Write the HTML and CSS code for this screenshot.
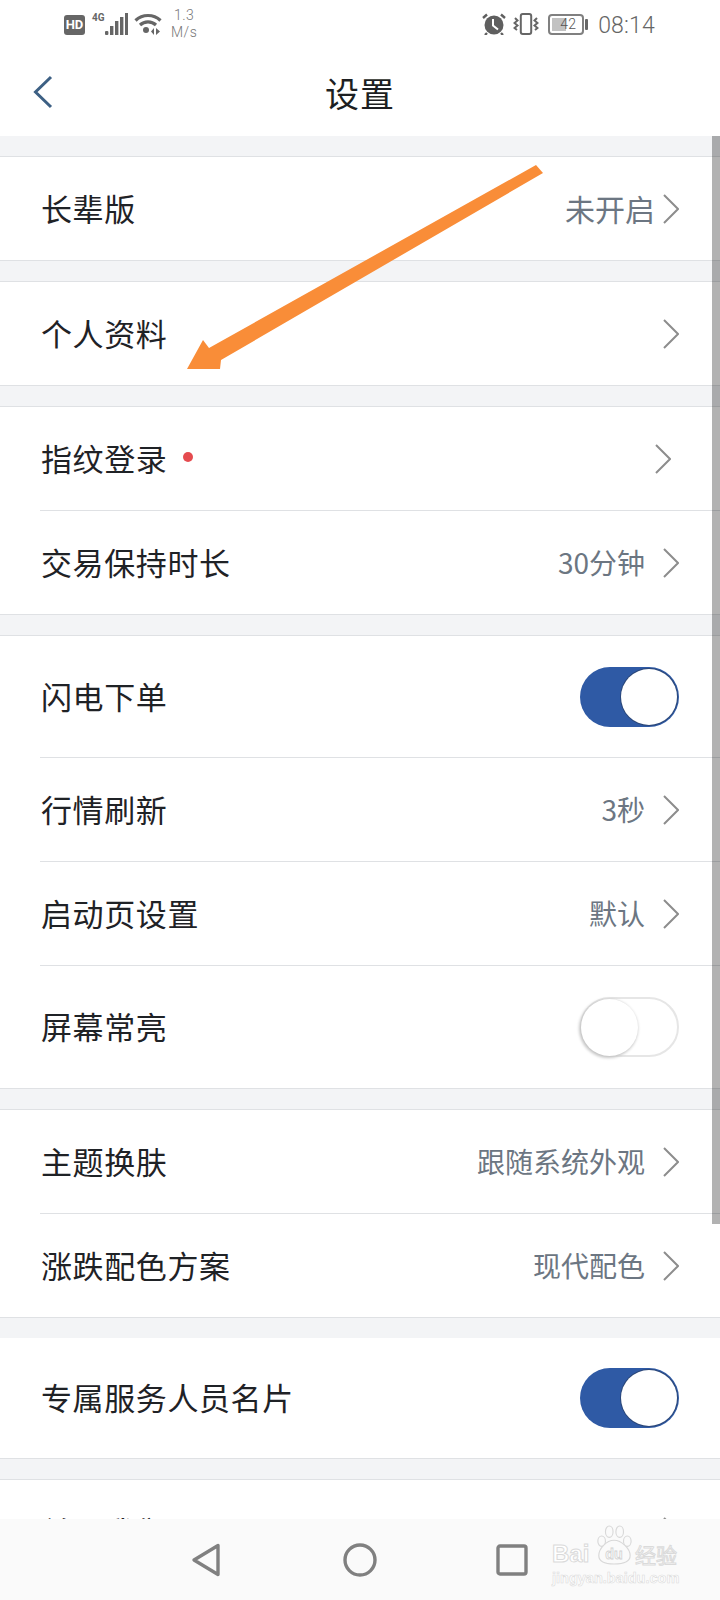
FILE: index.html
```html
<!DOCTYPE html>
<html lang="zh-CN">
<head>
<meta charset="utf-8">
<title>设置</title>
<link rel="stylesheet" href="styles.css">
</head>
<body>
<div class="page">
  <div class="status">
    <div class="status-left">
      <span class="hd">HD</span>
      <span class="net">4G</span>
      <svg class="signal" viewBox="0 0 23 22"><rect x="0" y="18" width="3.4" height="4" rx="1"/><rect x="5" y="13" width="3.4" height="9"/><rect x="10" y="8" width="3.4" height="14"/><rect x="15" y="4" width="3.4" height="18"/><rect x="20" y="0" width="3" height="22"/></svg>
      <svg class="wifi" viewBox="0 0 28 22"><path class="wifi-arc" d="M1.500 7.500C8.500 .8 19.500 .8 26.500 7.500"/><path class="wifi-arc" d="M6 12C10.500 7.800 17.500 7.800 22 12"/><circle cx="12" cy="17" r="3"/><path d="M20 15v7l-3-3.500zM22 15v7l4-3.500z"/></svg>
      <span class="speed"><span>1.3</span><span>M/s</span></span>
    </div>
    <div class="status-right">
      <svg class="alarm" viewBox="0 0 24 22"><circle cx="12" cy="12" r="9.500"/><path class="alarm-hand" d="M11 6v6.500l5 4"/><path class="alarm-bell" d="M1 5 5 1.500M23 5 19 1.500M5 20l-2 2M19 20l2 2"/></svg>
      <svg class="vibrate" viewBox="0 0 26 22"><rect x="7.800" y="1" width="10.400" height="20" rx="2"/><path d="M2 5l2.500 2.500L1.500 10l3 2.500L1.500 15l2.500 2M24 5l-2.500 2.500 3 2.500-3 2.500 3 2.500-2.500 2"/></svg>
      <span class="battery"><span class="battery-fill"></span><span class="battery-num">42</span></span>
      <span class="nub"></span>
      <span class="time">08:14</span>
    </div>
  </div>

  <div class="nav">
    <svg class="back" viewBox="0 0 20 34"><path d="M18 2 2.500 17 18 32"/></svg>
    <h1 class="title">设置</h1>
  </div>

  <div class="list">
    <section class="group">
      <div class="row"><span class="label">长辈版</span><span class="value value-big">未开启</span><svg class="chev chev-near" viewBox="0 0 16 30"><path d="M1 1 15 15 1 29"/></svg></div>
    </section>
    <section class="group">
      <div class="row"><span class="label">个人资料</span><svg class="chev" viewBox="0 0 16 30"><path d="M1 1 15 15 1 29"/></svg></div>
    </section>
    <section class="group">
      <div class="row"><span class="label">指纹登录</span><span class="dot"></span><svg class="chev chev-shift" viewBox="0 0 16 30"><path d="M1 1 15 15 1 29"/></svg></div>
      <div class="row"><span class="label">交易保持时长</span><span class="value">30分钟</span><svg class="chev" viewBox="0 0 16 30"><path d="M1 1 15 15 1 29"/></svg></div>
    </section>
    <section class="group">
      <div class="row row-tall"><span class="label">闪电下单</span><span class="toggle toggle-on"><span class="knob"></span></span></div>
      <div class="row"><span class="label">行情刷新</span><span class="value">3秒</span><svg class="chev" viewBox="0 0 16 30"><path d="M1 1 15 15 1 29"/></svg></div>
      <div class="row"><span class="label">启动页设置</span><span class="value">默认</span><svg class="chev" viewBox="0 0 16 30"><path d="M1 1 15 15 1 29"/></svg></div>
      <div class="row row-tall row-last"><span class="label">屏幕常亮</span><span class="toggle toggle-off"><span class="knob"></span></span></div>
    </section>
    <section class="group">
      <div class="row"><span class="label">主题换肤</span><span class="value">跟随系统外观</span><svg class="chev" viewBox="0 0 16 30"><path d="M1 1 15 15 1 29"/></svg></div>
      <div class="row"><span class="label">涨跌配色方案</span><span class="value">现代配色</span><svg class="chev" viewBox="0 0 16 30"><path d="M1 1 15 15 1 29"/></svg></div>
    </section>
    <section class="group group-plain">
      <div class="row row-tall"><span class="label">专属服务人员名片</span><span class="toggle toggle-on"><span class="knob"></span></span></div>
    </section>
    <section class="group">
      <div class="row"><span class="label">关于我们</span><svg class="chev" viewBox="0 0 16 30"><path d="M1 1 15 15 1 29"/></svg></div>
    </section>
  </div>

  <div class="scrollbar"></div>

  <svg class="arrow" viewBox="0 0 370 215"><polygon points="356,5 363,13 41,200 40,209 7,209 23,180 29,188"/></svg>

  <div class="softkeys">
    <svg class="key key-back" viewBox="0 0 30 34"><path d="M27 2.500V31.500L3 17Z"/></svg>
    <svg class="key key-home" viewBox="0 0 34 34"><circle cx="17" cy="17" r="15"/></svg>
    <svg class="key key-recent" viewBox="0 0 32 32"><rect x="2" y="2" width="28" height="28" rx="2"/></svg>
    <div class="mark">
      <div class="mark-top">
        <span class="mark-bai">Bai</span>
        <svg class="paw" viewBox="0 0 40 42"><ellipse cx="7" cy="17" rx="4" ry="5.500"/><ellipse cx="15" cy="7" rx="4" ry="6"/><ellipse cx="26" cy="7" rx="4" ry="6"/><ellipse cx="34" cy="17" rx="4" ry="5.500"/><path d="M20 16C12 16 4 25 4 32 4 38 10 41 20 41 30 41 37 38 37 32 37 25 28 16 20 16Z"/><text x="20" y="36" text-anchor="middle" class="paw-du">du</text></svg>
        <span class="mark-jy">经验</span>
      </div>
      <div class="mark-url">jingyan.baidu.com</div>
    </div>
  </div>
</div>
</body>
</html>
```

FILE: styles.css
```css
* { box-sizing: border-box; }
html, body { margin: 0; padding: 0; background: #fff; }
.page {
  position: relative;
  width: 720px;
  height: 1600px;
  overflow: hidden;
  background: #fff;
  font-family: "Noto Sans CJK SC", "Noto Sans", sans-serif;
  color: #23262b;
}

/* status bar */
.status {
  height: 50px;
  display: flex;
  justify-content: space-between;
  padding: 0 65px 0 64px;
}
.status-left, .status-right { display: flex; align-items: flex-start; }
.hd {
  margin-top: 15px;
  width: 21px;
  height: 20px;
  border-radius: 3px;
  background: #666;
  color: #fff;
  font: 700 13px/20px Roboto, sans-serif;
  text-align: center;
}
.net {
  margin: 12px 0 0 7px;
  width: 13px;
  font: 700 10px/12px Roboto, sans-serif;
  color: #666;
}
.signal { margin-top: 13px; width: 23px; height: 22px; fill: #666; }
.wifi { margin: 13px 0 0 6px; width: 28px; height: 22px; fill: #666; }
.wifi-arc { fill: none; stroke: #666; stroke-width: 3.2; }
.speed {
  margin: 7px 0 0 9px;
  display: flex;
  flex-direction: column;
  align-items: center;
  font: 300 14px/17px Roboto, sans-serif;
  color: #777;
  letter-spacing: .5px;
}
.alarm { margin-top: 13px; width: 24px; height: 22px; fill: #5f5f5f; }
.alarm-hand { fill: none; stroke: #fff; stroke-width: 2; }
.alarm-bell { fill: none; stroke: #5f5f5f; stroke-width: 2.4; }
.vibrate { margin: 13px 0 0 7px; width: 26px; height: 22px; fill: none; stroke: #666; stroke-width: 2; }
.battery {
  margin: 14px 0 0 9px;
  width: 36px;
  height: 21px;
  border: 2px solid #808080;
  border-radius: 4px;
  display: flex;
  align-items: center;
  padding-left: 2px;
  overflow: hidden;
  background: #fff;
}
.battery-fill { width: 14px; height: 13px; background: #c2c2c2; flex: none; }
.battery-num {
  margin-left: -9px;
  width: 22px;
  text-align: center;
  font: 300 14px/17px Roboto, sans-serif;
  color: #555;
}
.nub { margin: 19px 0 0 1px; width: 3px; height: 11px; background: #666; border-radius: 1px; }
.time {
  margin: 11px 0 0 10px;
  font: 300 23px/29px Roboto, sans-serif;
  color: #666;
  letter-spacing: .2px;
}

/* navigation */
.nav {
  height: 86px;
  display: flex;
  align-items: center;
  justify-content: center;
}
.back {
  position: absolute;
  left: 33px;
  top: 75px;
  width: 20px;
  height: 34px;
  fill: none;
  stroke: #3d6084;
  stroke-width: 3;
}
.title { margin: 0; font-size: 34px; font-weight: 400; line-height: 46px; color: #1d1f22; letter-spacing: 1px; }

/* list */
.list {
  background: #f3f4f6;
  padding-top: 20px;
  display: flex;
  flex-direction: column;
  gap: 20px;
  height: 1464px;
}
.group { background: #fff; border-top: 1px solid #dfe1e4; border-bottom: 1px solid #dfe1e4; flex: none; }
.group-plain { border-top: none; }
.group-plain .row.row-tall { height: 120px; }
.row {
  margin-left: 40px;
  padding-right: 41px;
  height: 103px;
  display: flex;
  align-items: center;
}
.row + .row { height: 104px; border-top: 1px solid #dfe1e4; }
.row.row-tall { height: 121px; }
.row + .row.row-tall { height: 122px; }
.row + .row.row-last { height: 123px; }
.label { padding: 0 0 2px 1px; font-size: 31px; line-height: 44px; letter-spacing: .6px; color: #1f2226; }
.value { margin-left: auto; padding-bottom: 2px; font-size: 28px; line-height: 40px; color: #6c7682; }
.value-big { font-size: 30px; }
.chev { flex: none; margin-left: 18px; width: 16px; height: 30px; fill: none; stroke: #8d8d8d; stroke-width: 2; }
.label + .chev { margin-left: auto; }
.chev-near { margin-left: 8px; }
.dot { margin-left: 16px; margin-bottom: 3px; width: 10px; height: 10px; border-radius: 50%; background: #e54b4f; }
.chev-shift { margin-left: auto; margin-right: 8px; }

.toggle {
  margin-left: auto;
  width: 99px;
  height: 60px;
  border-radius: 30px;
  display: flex;
  align-items: center;
}
.knob { display: block; border-radius: 50%; background: #fff; }
.toggle-on { background: #2f5aa5; justify-content: flex-end; padding-right: 2px; }
.toggle-on .knob { width: 56px; height: 56px; box-shadow: 0 0 0 1px #2b4778; }
.toggle-off { border: 2px solid #e6e6e6; background: #fff; }
.toggle-off .knob { margin-left: -1px; width: 57px; height: 57px; box-shadow: -1px 1px 3px 1px #c6c6c6; }

/* overlays */
.scrollbar {
  position: absolute;
  right: 0;
  top: 136px;
  width: 8px;
  height: 1088px;
  background: rgba(0, 0, 0, .3);
}
.arrow {
  position: absolute;
  left: 180px;
  top: 160px;
  width: 370px;
  height: 215px;
  fill: #f98d38;
}
.softkeys {
  position: absolute;
  left: 0;
  right: 0;
  bottom: 0;
  height: 81px;
  background: #fafafa;
}
.key { position: absolute; fill: none; stroke: #808080; stroke-width: 3.4; stroke-linejoin: round; }
.key-back { left: 191px; top: 24px; width: 30px; height: 34px; }
.key-home { left: 343px; top: 24px; width: 34px; height: 34px; }
.key-recent { left: 496px; top: 25px; width: 32px; height: 32px; }
.mark { position: absolute; left: 552px; top: 3px; width: 130px; }
.mark-top { display: flex; align-items: flex-end; height: 44px; }
.mark-bai, .mark-jy, .mark-url { color: #fff; -webkit-text-stroke: 1px #dadada; }
.mark-bai { flex: none; width: 46px; font: 700 24px/24px "Liberation Sans", sans-serif; }
.paw { flex: none; width: 38px; height: 42px; margin-left: -3px; fill: #fafafa; stroke: #d8d8d8; stroke-width: 1.200; }
.paw-du { font: 700 15px "Liberation Sans", sans-serif; fill: #fafafa; stroke: #d2d2d2; stroke-width: .8; }
.mark-jy { flex: none; font-size: 21px; line-height: 24px; margin-left: 2px; white-space: nowrap; }
.mark-url { margin-top: 3px; font: 700 14.500px/18px "Liberation Sans", sans-serif; white-space: nowrap; -webkit-text-stroke: .6px #dcdcdc; }
```
